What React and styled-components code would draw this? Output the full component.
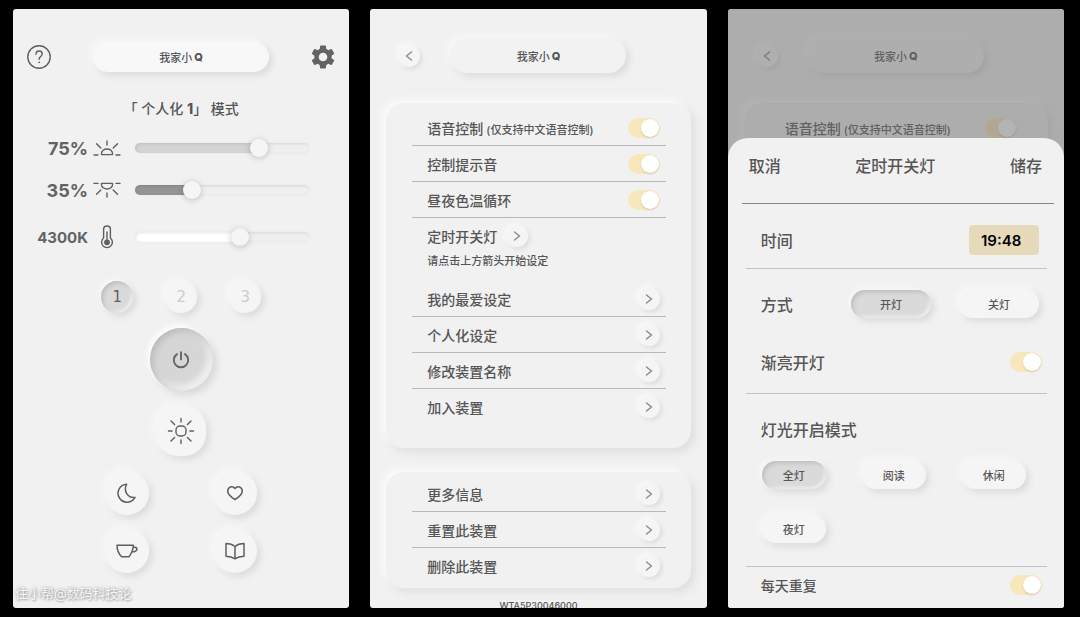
import React, { useId, useState } from "react";
import styled, { createGlobalStyle, css } from "styled-components";
import { MdSettings } from "react-icons/md";

const GlobalStyle = createGlobalStyle`
    * {
        box-sizing: border-box;
    }
    body {
        margin: 0;
        background: #000;
        color: #565656;
        font-family: Inter, "Noto Sans CJK SC", sans-serif;
        font-size: 14px;
        font-weight: 500;
    }
    button, input {
        font: inherit;
        color: inherit;
    }
    h1, h2, p {
        margin: 0;
        font: inherit;
    }
`;

const raised = css`
    background: #f5f5f5;
    box-shadow: -3px -3px 6px #f8f8f8, 3px 3px 7px #d8d8d8;
`;

const pressed = css`
    background: #dadada;
    box-shadow: inset 2px 2px 4px #bdbdbd, inset -2px -2px 3px #f0f0f0,
        -2px -2px 4px #f9f9f9, 3px 3px 7px #d8d8d8;
`;

const Page = styled.main`
    display: grid;
    grid-template-columns: repeat(3, minmax(0, 1fr));
    gap: 21px;
    height: 100vh;
    padding: 9px 16px 9px 13px;
`;

const Screen = styled.section`
    position: relative;
    display: flex;
    flex-direction: column;
    overflow: hidden;
    border-radius: 3px;
    background: #f1f1f1;
`;

const BareButton = styled.button`
    display: inline-flex;
    align-items: center;
    justify-content: center;
    padding: 0;
    border: 0;
    background: none;
    cursor: pointer;
`;

const DeviceName = styled.h1`
    display: flex;
    align-items: center;
    justify-content: center;
    gap: 2px;
    width: 176px;
    height: ${props => props.$height}px;
    border-radius: 18px;
    font-size: 11px;
    ${raised}
    background: ${props => props.$background};

    b {
        font-weight: 800;
    }
`;

/* ---------- lamp screen ---------- */

const LampHeader = styled.header`
    display: flex;
    align-items: center;
    justify-content: space-between;
    padding: 33px 14px 0;
`;

const ModeTitle = styled.h2`
    margin-top: 25px;
    line-height: 24px;
    text-align: center;

    b {
        font-weight: 800;
    }
`;

const SliderRow = styled.div`
    display: grid;
    grid-template-columns: 80px 42px 1fr;
    align-items: center;
    height: 42px;
    padding-right: 40px;
    margin-top: ${props => props.$gap || 0}px;

    label {
        padding-right: 5px;
        text-align: right;
        font-size: ${props => props.$small ? 15 : 18}px;
        font-weight: 700;
        color: #636363;
    }
    svg {
        width: 28px;
    }
`;

const Range = styled.input`
    appearance: none;
    width: 100%;
    height: 18px;
    margin: 0;
    padding: 4px 0;
    background: transparent;
    cursor: pointer;

    &::-webkit-slider-runnable-track {
        height: 10px;
        border-radius: 5px;
        background: linear-gradient(to right, ${props => props.$fill} var(--fill), #efefef var(--fill));
        box-shadow: inset 1px 1px 3px rgba(0, 0, 0, 0.1), 0 0 2px #e2e2e2;
    }
    &::-webkit-slider-thumb {
        appearance: none;
        width: 18px;
        height: 18px;
        margin-top: -4px;
        border-radius: 50%;
        background: #f5f5f5;
        box-shadow: 0 1px 6px rgba(0, 0, 0, 0.22);
    }
`;

const Presets = styled.div`
    display: flex;
    justify-content: center;
    gap: 32px;
    margin-top: 23px;
`;

const Preset = styled(BareButton)`
    width: 32px;
    height: 32px;
    border-radius: 50%;
    font-family: "DejaVu Sans", sans-serif;
    font-size: 15px;
    font-weight: 400;
    color: #cdcdcd;
    ${raised}

    &[aria-pressed="true"] {
        color: #5f5f5f;
        ${pressed}
    }
`;

const Power = styled(BareButton)`
    align-self: center;
    width: 63px;
    height: 63px;
    margin-top: 15px;
    border-radius: 50%;
    ${raised}

    &[aria-pressed="true"] {
        background: #d6d6d6;
        box-shadow: inset 3px 3px 6px #bcbcbc, inset -5px -5px 7px #f1f1f1,
            -3px -3px 4px #fcfcfc, 4px 4px 7px #d8d8d8;
    }
`;

const FullLight = styled(BareButton)`
    align-self: center;
    width: 50px;
    height: 50px;
    margin-top: 15px;
    border-radius: 22px;
    ${raised}
`;

const Scenes = styled.div`
    display: grid;
    grid-template-columns: 44px 44px;
    justify-content: center;
    gap: 14px 64px;
    margin-top: 15px;
`;

const Scene = styled(BareButton)`
    height: 44px;
    border-radius: 50%;
    ${raised}
`;

const Watermark = styled.span`
    position: absolute;
    left: 2px;
    bottom: 5px;
    font-size: 13px;
    font-weight: 400;
    line-height: 20px;
    color: #f6f6f6;
    text-shadow: 0 0 3px #999, 1px 1px 2px #b0b0b0;
`;

const Icon = styled.svg.attrs(props => ({
    fill: "none",
    stroke: props.stroke || "#5f5f5f",
    strokeLinecap: "round",
    strokeLinejoin: "round",
    "aria-hidden": true,
}))`
    display: block;
    flex: none;
`;

const HelpIcon = () => (
    <Icon width="24" height="24" viewBox="0 0 24 24" strokeWidth="1.4">
        <circle cx="12" cy="12" r="11.2" />
        <path d="M9 9.300c0-2 1.300-3.300 3.100-3.300s3.100 1.200 3.100 2.900c0 2.500-3.100 2.700-3.100 5.300" />
        <circle cx="12.1" cy="17.3" r=".5" fill="#5f5f5f" strokeWidth=".7" />
    </Icon>
);

const UpLightIcon = () => (
    <Icon width="28" height="16" viewBox="0 0 28 16" strokeWidth="1.4">
        <path d="M1 15h4M23 15h4M8.500 14.600v-1.100a5.500 4.500 0 0 1 11 0v1.100zM14 1v4M3.500 3.700l4.300 4.300M24.500 3.700l-4.300 4.300" />
    </Icon>
);

const DownLightIcon = () => (
    <Icon width="28" height="16" viewBox="0 0 28 16" strokeWidth="1.4">
        <path d="M1 1.400h4M23 1.400h4M8.500 1.400v1.100a5.500 4.500 0 0 0 11 0V1.400zM14 11v4M3.500 12.300l4.300-4.300M24.500 12.300l-4.300-4.300" />
    </Icon>
);

const ThermometerIcon = () => (
    <Icon width="14" height="24" viewBox="0 0 14 24" strokeWidth="1.4">
        <path d="M3.6 13V4.4a3.4 3.4 0 0 1 6.8 0V13a5.4 5.4 0 1 1-6.8 0zM7 7v8" />
        <circle cx="7" cy="17.3" r="2.2" fill="#5f5f5f" />
    </Icon>
);

const PowerIcon = () => (
    <Icon width="18" height="18" viewBox="0 0 18 18" strokeWidth="1.900" stroke="#666">
        <path d="M5 3.100a7.200 7.200 0 1 0 8 0M9 1.200v7.200" />
    </Icon>
);

const SunIcon = () => (
    <Icon width="28" height="28" viewBox="0 0 28 28" strokeWidth="1.4">
        <rect x="9" y="9" width="10" height="10" rx="4" />
        <path d="M14 1.500v3.600M14 22.900v3.600M1.500 14h3.600M22.900 14h3.600M4 4l3.600 3.600M20.400 20.400L24 24M24 4l-3.600 3.600M7.600 20.400L4 24" />
    </Icon>
);

const MoonIcon = () => (
    <Icon width="20" height="20" viewBox="0 0 20 20" strokeWidth="1.5">
        <path d="M9.600 1.200A9 9 0 1 0 18 14.400C10.500 15 6.200 8 9.600 1.200z" />
    </Icon>
);

const HeartIcon = () => (
    <Icon width="18" height="16" viewBox="0 0 18 16" strokeWidth="1.6">
        <path d="M9 3.500C7.600 1.400 5 1.300 3.300 2.600 1.100 4.400 1.400 7.600 3.200 9.700 4.700 11.500 7 13.400 9 14.500c2-1.100 4.300-3 5.800-4.800 1.800-2.100 2.100-5.300-.1-7.100C13 1.300 10.400 1.400 9 3.500z" />
    </Icon>
);

const CupIcon = () => (
    <Icon width="22" height="14" viewBox="0 0 22 14" strokeWidth="1.5">
        <path d="M1 1.300h16.300c0 3.200-.5 6.500-4.300 11.400H5.600C2.300 9.500 1 5.500 1 1.300zM17.400 3.300c2-.4 3.600.3 3.600 1.800 0 2-2.800 3-5 2.700" />
    </Icon>
);

const BookIcon = () => (
    <Icon width="20" height="18" viewBox="0 0 20 18" strokeWidth="1.5">
        <path d="M10 4.500C7.500 2.500 4.500 1.700 1 1.600v12.600c3.500.1 6.500.8 9 2.600 2.500-1.800 5.500-2.500 9-2.600V1.600c-3.500.1-6.500.9-9 2.900zM10 4.500v12.300" />
    </Icon>
);

function Slider(props) {
    const id = useId();
    const [value, setValue] = useState(props.value);
    const percent = ((value - props.min) / (props.max - props.min)) * 100;

    return (
        <SliderRow $gap={props.gap} $small={props.unit === "K"}>
            <label htmlFor={id}>{value}{props.unit}</label>
            {props.icon}
            <Range
                id={id}
                type="range"
                min={props.min}
                max={props.max}
                value={value}
                $fill={props.fill}
                style={{ "--fill": `${percent}%` }}
                onChange={e => setValue(Number(e.target.value))}
            />
        </SliderRow>
    );
}

function LampScreen() {
    const [preset, setPreset] = useState(1);
    const [on, setOn] = useState(true);

    return (
        <Screen>
            <LampHeader>
                <BareButton aria-label="说明"><HelpIcon /></BareButton>
                <DeviceName $height={30} $background="#f8f8f8">我家小<b>Q</b></DeviceName>
                <BareButton aria-label="设定"><MdSettings size={24} viewBox="2 2 20 20" color="#636363" /></BareButton>
            </LampHeader>
            <ModeTitle>「 个人化 <b>{preset}</b>」 模式</ModeTitle>
            <Slider value={75} min={5} max={100} unit="%" fill="#d4d4d4" icon={<UpLightIcon />} gap={6} />
            <Slider value={35} min={6} max={100} unit="%" fill="#949494" icon={<DownLightIcon />} />
            <Slider value={4300} min={2700} max={5300} unit="K" fill="#ffffff" icon={<ThermometerIcon />} gap={5} />
            <Presets>
                {[1, 2, 3].map(n => (
                    <Preset key={n} aria-pressed={preset === n} onClick={() => setPreset(n)}>{n}</Preset>
                ))}
            </Presets>
            <Power aria-label="电源" aria-pressed={on} onClick={() => setOn(!on)}><PowerIcon /></Power>
            <FullLight aria-label="全灯"><SunIcon /></FullLight>
            <Scenes>
                <Scene aria-label="夜灯"><MoonIcon /></Scene>
                <Scene aria-label="最爱"><HeartIcon /></Scene>
                <Scene aria-label="休闲"><CupIcon /></Scene>
                <Scene aria-label="阅读"><BookIcon /></Scene>
            </Scenes>
            <Watermark>住小帮@数码科技论</Watermark>
        </Screen>
    );
}

/* ---------- settings screen ---------- */

const SettingsHeader = styled.header`
    display: grid;
    grid-template-columns: 1fr auto 1fr;
    align-items: center;
    padding: 29px 28px 0;
`;

const RoundButton = styled(BareButton)`
    width: 22px;
    height: 22px;
    border-radius: 50%;
    ${raised}
    box-shadow: -2px -2px 4px #f9f9f9, 2px 2px 4px #dadada;
`;

const Card = styled.div`
    margin: ${props => props.$top}px 16px 0;
    padding: ${props => props.$padding};
    border-radius: 18px;
    background: #f1f1f1;
    box-shadow: -4px -4px 6px #fafafa, 4px 4px 8px #dedede;
`;

const Row = styled.div`
    display: flex;
    align-items: center;
    justify-content: space-between;
    height: 36px;
    padding: 0 6px 0 15px;
    border-bottom: 1px solid ${props => props.$last ? "transparent" : "#b9b9b9"};

    small {
        margin-left: 3px;
        font-size: 11px;
    }
`;

const TimerRow = styled(Row)`
    justify-content: flex-start;
    gap: 9px;
`;

const Hint = styled.p`
    padding: 0 15px 13px;
    font-size: 11px;
    line-height: 14px;
`;

const Serial = styled.p`
    margin-top: 12px;
    font-size: 9px;
    line-height: 12px;
    text-align: center;
    white-space: nowrap;
`;

const Toggle = styled.input.attrs({ type: "checkbox", role: "switch" })`
    appearance: none;
    flex: none;
    display: flex;
    width: 32px;
    height: 20px;
    margin: 0;
    padding: 1px;
    border-radius: 10px;
    background: #dddddd;
    cursor: pointer;

    &::before {
        content: "";
        width: 18px;
        height: 18px;
        border-radius: 50%;
        background: #fff;
        box-shadow: 0 1px 2px rgba(0, 0, 0, 0.15);
    }
    &:checked {
        justify-content: flex-end;
        background: #f8e7bb;
    }
`;

function Chevron(props) {
    return (
        <Icon width="10" height="12" viewBox="0 0 10 12" stroke="#8f8f8f" strokeWidth="1.6">
            <path d={props.left ? "M7.500 2L2.500 6l5 4" : "M2.500 2l5 4-5 4"} />
        </Icon>
    );
}

function SwitchRow(props) {
    const id = useId();
    return (
        <Row $last={props.last}>
            <label htmlFor={id}>
                {props.label}
                {props.note && <small>{props.note}</small>}
            </label>
            <Toggle id={id} defaultChecked />
        </Row>
    );
}

function LinkRow(props) {
    return (
        <Row $last={props.last}>
            <span>{props.label}</span>
            <RoundButton aria-label={props.label}><Chevron /></RoundButton>
        </Row>
    );
}

function Header() {
    return (
        <SettingsHeader>
            <RoundButton aria-label="返回"><Chevron left /></RoundButton>
            <DeviceName $height={35} $background="#f2f2f2">我家小<b>Q</b></DeviceName>
        </SettingsHeader>
    );
}

function VoiceRow(props) {
    return <SwitchRow label="语音控制" note="(仅支持中文语音控制)" last={props.last} />;
}

function SettingsScreen() {
    return (
        <Screen>
            <Header />
            <Card $top={30} $padding="7px 25px 23px 26px">
                <VoiceRow />
                <SwitchRow label="控制提示音" />
                <SwitchRow label="昼夜色温循环" />
                <TimerRow $last>
                    <span>定时开关灯</span>
                    <RoundButton aria-label="定时开关灯"><Chevron /></RoundButton>
                </TimerRow>
                <Hint>请点击上方箭头开始设定</Hint>
                <LinkRow label="我的最爱设定" />
                <LinkRow label="个人化设定" />
                <LinkRow label="修改装置名称" />
                <LinkRow label="加入装置" last />
            </Card>
            <Card $top={24} $padding="4px 25px 4px 26px">
                <LinkRow label="更多信息" />
                <LinkRow label="重置此装置" />
                <LinkRow label="删除此装置" last />
            </Card>
            <Serial>WTA5P30046000</Serial>
        </Screen>
    );
}

/* ---------- timer sheet ---------- */

const Backdrop = styled.div`
    position: absolute;
    inset: 0;
    padding-top: 129px;
    background: rgba(105, 105, 105, 0.5);
`;

const Sheet = styled.div`
    min-height: 100%;
    border-radius: 20px 20px 0 0;
    background: #f1f1f1;
    font-size: 16px;
`;

const SheetHeader = styled.header`
    display: flex;
    justify-content: space-between;
    margin: 0 10px 0 14px;
    padding: 16px 12px 25px 7px;
    border-bottom: 1px solid #858585;
    line-height: 24px;
`;

const Group = styled.div`
    margin: 0 17px 0 18px;
    padding: ${props => props.$padding || 0};
    border-bottom: ${props => props.$last ? 0 : "1px solid #c2c2c2"};
`;

const Field = styled.div`
    display: flex;
    align-items: center;
    justify-content: space-between;
    height: ${props => props.$height}px;
    padding: 0 ${props => props.$end || 8}px 0 15px;
    font-size: ${props => props.$small ? 14 : 16}px;
`;

const TimeInput = styled.input`
    width: 70px;
    height: 30px;
    padding: 0 0 0 12px;
    border: 0;
    border-radius: 4px;
    background: #e6dabb;
    color: #000;
    font-size: 15px;
    font-weight: 600;
`;

const Choices = styled.div`
    display: flex;
    gap: 28px;
`;

const ModeTitleRow = styled.h2`
    padding: 0 15px;
    line-height: 24px;
`;

const Modes = styled.div`
    display: grid;
    grid-template-columns: repeat(3, 64px);
    gap: 26px 36px;
    margin-top: 19px;
    padding: 0 16px;
`;

const Pill = styled(BareButton)`
    width: ${props => props.$wide ? "80px" : "auto"};
    height: 28px;
    border-radius: 14px;
    font-size: 11px;
    ${raised}

    &[aria-pressed="true"] {
        ${pressed}
    }
`;

function TimerSheet() {
    const [action, setAction] = useState("开灯");
    const [mode, setMode] = useState("全灯");

    return (
        <Backdrop>
            <Sheet role="dialog" aria-label="定时开关灯">
                <SheetHeader>
                    <BareButton>取消</BareButton>
                    <h2>定时开关灯</h2>
                    <BareButton>储存</BareButton>
                </SheetHeader>
                <Group $padding="8px 0 0">
                    <Field $height={56}>
                        <label htmlFor="time">时间</label>
                        <TimeInput id="time" defaultValue="19:48" />
                    </Field>
                </Group>
                <Group $padding="0 0 8px">
                    <Field $height={70}>
                        <span>方式</span>
                        <Choices>
                            {["开灯", "关灯"].map(name => (
                                <Pill key={name} $wide aria-pressed={action === name} onClick={() => setAction(name)}>{name}</Pill>
                            ))}
                        </Choices>
                    </Field>
                    <Field $height={46} $end={5}>
                        <label htmlFor="fade">渐亮开灯</label>
                        <Toggle id="fade" defaultChecked />
                    </Field>
                </Group>
                <Group $padding="24px 0 23px">
                    <ModeTitleRow>灯光开启模式</ModeTitleRow>
                    <Modes>
                        {["全灯", "阅读", "休闲", "夜灯"].map(name => (
                            <Pill key={name} aria-pressed={mode === name} onClick={() => setMode(name)}>{name}</Pill>
                        ))}
                    </Modes>
                </Group>
                <Group $last>
                    <Field $height={36} $end={5} $small>
                        <label htmlFor="repeat">每天重复</label>
                        <Toggle id="repeat" defaultChecked />
                    </Field>
                </Group>
            </Sheet>
        </Backdrop>
    );
}

function TimerScreen() {
    return (
        <Screen>
            <Header />
            <Card $top={30} $padding="7px 25px 23px 26px">
                <VoiceRow last />
            </Card>
            <TimerSheet />
        </Screen>
    );
}

function App() {
    return (
        <>
            <GlobalStyle />
            <Page>
                <LampScreen />
                <SettingsScreen />
                <TimerScreen />
            </Page>
        </>
    );
}

export default App;
